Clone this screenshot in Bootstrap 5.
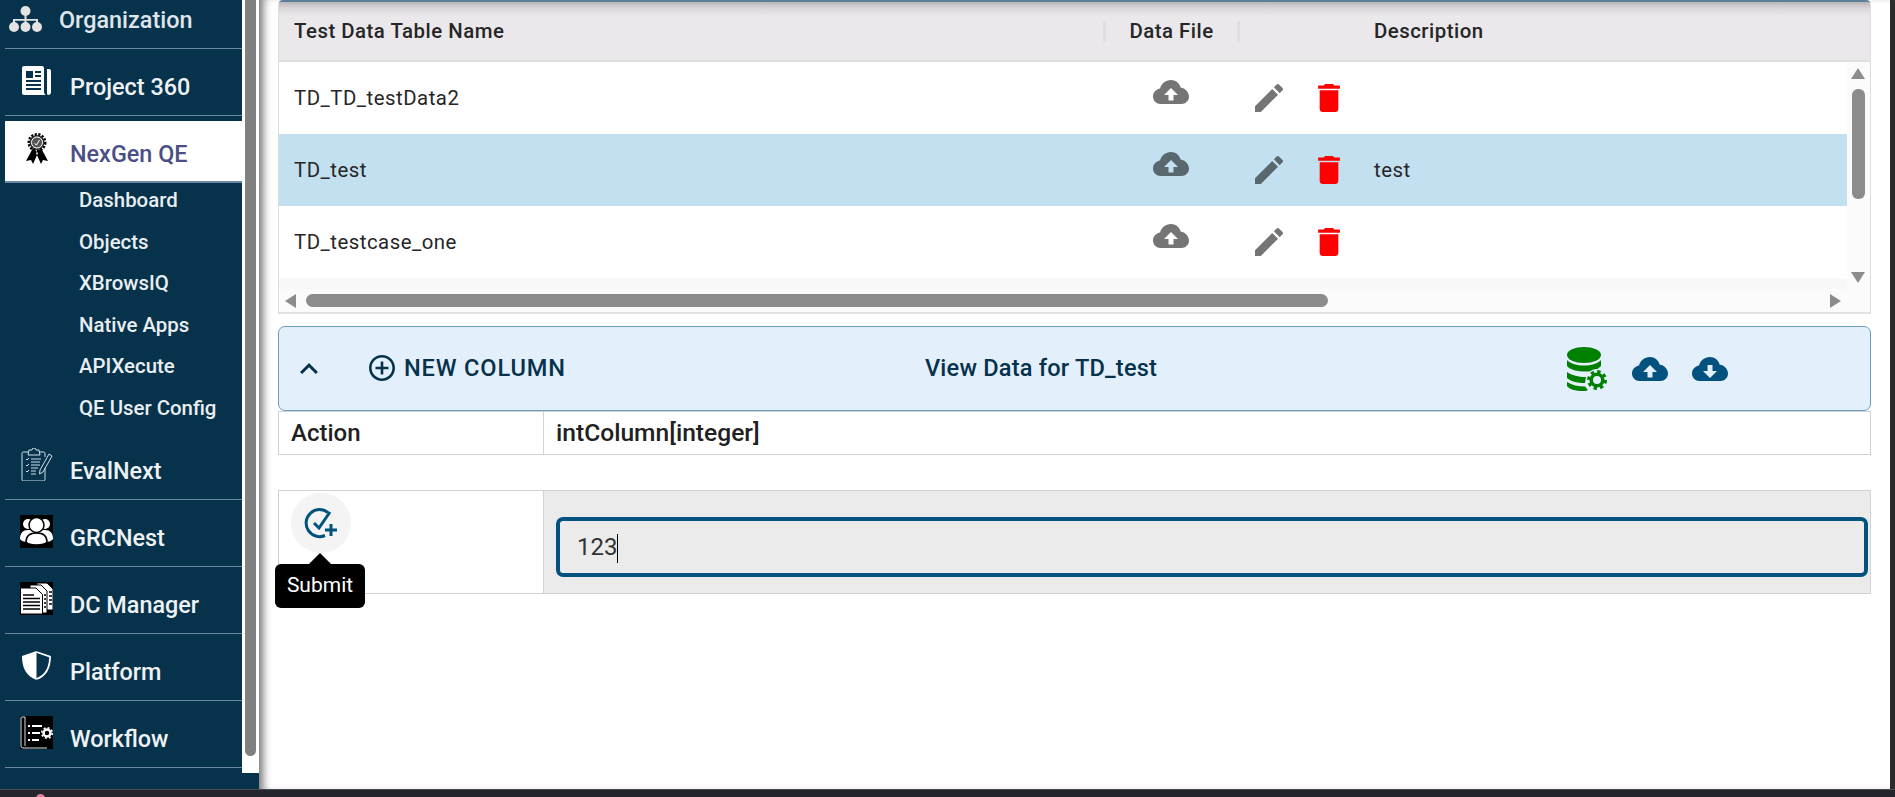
<!DOCTYPE html>
<html lang="en">
<head>
<meta charset="utf-8">
<title>NexGen QE</title>
<link href="https://cdn.jsdelivr.net/npm/bootstrap@5.3.0/dist/css/bootstrap.min.css" rel="stylesheet">
<style>
html,body{height:797px;overflow:hidden}
body{font-family:Roboto,"Liberation Sans",sans-serif;background:#24262d;color:#212121}
.shell{height:789px}
.sidebar{width:259px;background:#06324b;flex:none}
.side-list{width:242px;padding-left:5px;height:789px}
.gutter{width:17px;height:773px;background:#fff;padding:0 3px}
.gutter-thumb{height:756px;background:#808080;border-radius:0 0 6px 6px}
.side-item{height:67px;border-bottom:1px solid #6f86a3;color:#eef2f5;font-size:23.4px;font-weight:500;padding-top:11px}
.side-item svg{flex:none}
.side-item .ic{width:33px;margin-left:15px;margin-right:17px;margin-top:-15px;display:flex;justify-content:center}
.side-first{height:49px;padding-top:0;color:#dfe5ea}
.side-first .ic{margin-left:4px;margin-right:17px;margin-top:-11px}
.side-first .lbl{margin-top:-6px}
.side-active{height:62px;margin-top:5px;background:#fff;color:#4b4f86;padding-top:0;border-bottom:2px solid #6f86a3}
.side-active .ic{margin-top:-5px}
.side-active .lbl{margin-top:8px}
.sub-list{height:250px;margin-top:-3px;margin-bottom:3px}
.sub-item{height:41.6px;padding-left:74px;font-size:20.4px;font-weight:500;color:#e9eef2;line-height:41px}
.main-pane{box-shadow:inset 9px 0 8px -5px rgba(0,0,0,.55);background:#fff;padding:0 19px;min-width:0}
.edge{width:5px;background:#2b2b2b;flex:none}
.bottom-bar{height:8px;background:#24262d;border-top:1px solid #4a4c52;padding-left:36px}
.pink-dot{width:9px;height:9px;border-radius:50%;background:#e8809a;margin-top:4px}
.dt-card{height:314px;border:1px solid #ddd;border-top:2px solid #5d7f99;border-radius:5px 5px 0 0;border-bottom:2px solid #e2e2e2;margin-bottom:12px;background:#fbfbfb;overflow:hidden}
table.dt{table-layout:fixed;width:100%;margin:0;letter-spacing:.5px;font-size:20.4px}
table.dt th,table.dt td{padding:0;border:0;vertical-align:middle;color:#262626}
table.dt th{height:59px;padding-top:1px;font-weight:500;font-size:20.4px;--bs-table-bg:transparent;border-bottom:2px solid #dedede}
.dt-head{background:linear-gradient(#b8b6b8 0,#d8d6d8 6px,#eae8ea 14px)}
.c-name{width:825px}
.c-file,.c-act{width:135px}
table.dt .p-name{padding-left:15px}
.hsep{border-left:3px solid #e0dfe0;border-right:3px solid #e0dfe0;height:21px;line-height:21px;margin:0 -1px}
table.dt td{height:72px;background:#fff}
table.dt tr.picked td{--bs-table-bg:#c3e0f1;background:#c3e0f1}
.cloud-ic{display:block;margin:-12px 0 0 49px;fill:rgba(0,0,0,.54)}
.act-cell{padding-left:16px!important}
.act-row{gap:35px}
.act-pen{fill:rgba(0,0,0,.54)}
.act-bin{fill:#f00}
.strip{height:11px;background:#f8f8f8}
.vscroll{width:23px;height:226px;background:#fbfbfb;padding:6px 0 5px 4px;flex:none}
.vthumb{width:13px;height:110px;background:#8c8c8c;border-radius:6px;margin:10px 0 0 1px}
.tri-up,.tri-down{width:0;height:0;border-left:7.5px solid transparent;border-right:7.5px solid transparent}
.tri-up{border-bottom:11px solid #8c8c8c}
.tri-down{border-top:11px solid #8c8c8c}
.hscroll{height:24px;padding:5px 0 0 6px}
.tri-left,.tri-right{width:0;height:0;border-top:7px solid transparent;border-bottom:7px solid transparent}
.tri-left{border-right:11px solid #8c8c8c}
.tri-right{border-left:11px solid #8c8c8c;margin-right:29px}
.hthumb{height:13px;background:#8c8c8c;border-radius:7px;margin-left:10px}
.panel-bar{height:85px;background:#e3f0fc;border:1px solid #6b9bbd;border-radius:7px;color:#06324b}
.chev{margin-left:21px;fill:#06324b}
.new-col{margin-left:51px;padding:0;border:0;background:none;color:#06324b;font-size:23.6px;font-weight:500;letter-spacing:.85px}
.new-col svg{fill:#06324b;margin-right:9px}
.view-title{font-size:23.6px;font-weight:500;margin-left:359px;letter-spacing:.2px}
.bar-icons{margin-right:142px}
.bar-icons .up-ic{fill:#01527f;margin-left:24px}
table.grid-t{table-layout:fixed;width:100%;margin:0;border-color:#d2d2d2;font-size:24px}
table.grid-t td{border:1px solid #d2d2d2;padding:0;color:#212121}
.g-left{width:265px}
.r-head td{height:43px;vertical-align:middle;line-height:1.2}
.r-head td:first-child{padding-left:12px!important;font-weight:500}
.r-head td:last-child{padding-left:12px!important;font-size:24.6px;font-weight:500}
.spacer-row{height:35px}
.r-edit td{height:101px}
table.grid-t .edit-cell{background:#ebebeb;padding:26px 2px 0 12px;vertical-align:top}
.submit-wrap{width:60px;margin-left:12px;height:100px}
.submit-btn{width:60px;height:60px;padding:2px 0 0;border:0;border-radius:50%;background:#f4f4f4;margin-top:2px}
.tip{left:-16px;top:71px;width:90px;height:44px;background:#000;color:#fff;border-radius:6px;font-size:21px;z-index:5}
.tip::before{content:"";position:absolute;left:34px;top:-11px;border-left:11px solid transparent;border-right:11px solid transparent;border-bottom:11px solid #000}
.val-input.form-control{height:60px;background:#ebebeb;border:4px solid #01527f;border-radius:7px;font-size:24px;padding:0 17px;color:#333;box-shadow:none;caret-color:transparent;font-family:Roboto,sans-serif}
.caret-mark{left:61px;top:17px;width:1px;height:29px;background:#000}
</style>
</head>
<body class="d-flex flex-column">
<div class="shell d-flex">
  <aside class="sidebar d-flex align-items-start">
    <nav class="side-list">
      <div class="side-item side-first d-flex align-items-center"><span class="ic">
        <svg width="33" height="26" viewBox="0 0 33 26" fill="#e3e3e3"><circle cx="16.5" cy="5" r="5"/><circle cx="5" cy="21" r="5"/><circle cx="16.5" cy="21" r="5"/><circle cx="28" cy="21" r="5"/><path d="M15.5 8h2v5H29v4h-2v-2.200H17.500V17h-2v-2.200H6V17H4v-4h11.500z"/></svg></span><span class="lbl">Organization</span></div>
      <div class="side-item d-flex align-items-center"><span class="ic">
        <svg width="29" height="29" viewBox="0 0 29 29"><path fill="#fff" d="M2 0h18a2 2 0 0 1 2 2v24c0 1 .5 2 1.500 3H2a2 2 0 0 1-2-2V2a2 2 0 0 1 2-2z"/><path fill="#fff" d="M25 3h2a2 2 0 0 1 2 2v21a3 3 0 0 1-3 3l-1-1z"/><path fill="#06324b" d="M4 5h7v7H4zM13 5h6v2h-6zM13 9h6v2h-6zM4 14h15v2H4zM4 18h15v2H4zM4 22h15v2H4z"/></svg></span><span class="lbl">Project 360</span></div>
      <div class="side-item side-active d-flex align-items-center"><span class="ic">
        <svg width="22" height="31" viewBox="0 0 22 31"><path d="M7 15 0 28l5-1 2 4 5-11zM15 15l7 13-5-1-2 4-5-11z" fill="#000"/><circle cx="11" cy="9.500" r="7.500" fill="#333"/><circle cx="11" cy="9.500" r="8.300" fill="none" stroke="#000" stroke-width="2.400" stroke-dasharray="2.200 1.450"/><circle cx="11" cy="9.500" r="5.500" fill="#555" stroke="#fff" stroke-width="1"/><path d="m8.500 10.500 2 1.500 3-5" fill="none" stroke="#fff" stroke-width="1"/></svg></span><span class="lbl">NexGen QE</span></div>
      <div class="sub-list">
        <div class="sub-item">Dashboard</div>
        <div class="sub-item">Objects</div>
        <div class="sub-item">XBrowsIQ</div>
        <div class="sub-item">Native Apps</div>
        <div class="sub-item">APIXecute</div>
        <div class="sub-item">QE User Config</div>
      </div>
      <div class="side-item d-flex align-items-center"><span class="ic">
        <svg width="32" height="33" viewBox="0 0 32 33" fill="none" stroke="#cfe0ea" stroke-width="1"><path d="M7 4H2.500A1.500 1.500 0 0 0 1 5.500v26A1.500 1.500 0 0 0 2.500 33h20a1.500 1.500 0 0 0 1.500-1.500V20M19 4h3.500A1.500 1.500 0 0 1 24 5.500V9"/><path d="M8 2h3a2 2 0 0 1 4 0h3l1 5H7z"/><path d="M5 11l1 1 2-2M5 17l1 1 2-2M5 23l1 1 2-2M10 11h10M10 14h9M10 17h9M10 20h7M10 23h5M10 26h5"/><path d="M28 6l3 2-9 16-3.500 2 .5-4z"/></svg></span><span class="lbl">EvalNext</span></div>
      <div class="side-item d-flex align-items-center"><span class="ic">
        <svg width="33" height="33" viewBox="0 0 33 33"><rect width="33" height="33" fill="#000"/><g fill="#fff"><circle cx="8" cy="9" r="5"/><circle cx="25" cy="9" r="5"/><path d="M0 24c0-6 3-9 8-9h17c5 0 8 3 8 9-1 2-4 3-8 3H8c-4 0-7-1-8-3z"/></g><g fill="#fff" stroke="#000" stroke-width="1.500"><circle cx="16.500" cy="10" r="7.500"/><path d="M6 27c0-6 4-9 10.500-9S27 21 27 27c-3 4-18 4-21 0z"/></g></svg></span><span class="lbl">GRCNest</span></div>
      <div class="side-item d-flex align-items-center"><span class="ic">
        <svg width="33" height="33" viewBox="0 0 33 33"><rect width="33" height="33" fill="#000"/><g fill="#fff" stroke="#000" stroke-width="1"><path d="M17 1h10l6 6v21H17z"/><path d="M10 3h11l6 6v22H10z"/><path d="M.5 6H16l6.500 6.500V32H.5z"/></g><path stroke="#000" stroke-width="1.300" d="M3 13h11M3 16.500h17M3 20h17M3 23.500h17M3 27h17M24 13h2M24 17h2M24 21h2M24 25h2M29 10h3M29 14h3M29 18h3M29 22h3"/></svg></span><span class="lbl">DC Manager</span></div>
      <div class="side-item d-flex align-items-center"><span class="ic">
        <svg width="29" height="29" viewBox="0 0 29 29"><path fill="#fff" d="M14.500 0 0 5c0 12 4 20 14.500 24z"/><path fill="none" stroke="#fff" stroke-width="1.800" d="M14.500 1 28 5.700c0 11-4 18.800-13.500 22.300"/></svg></span><span class="lbl">Platform</span></div>
      <div class="side-item d-flex align-items-center"><span class="ic">
        <svg width="33" height="33" viewBox="0 0 33 33"><rect width="33" height="33" fill="#000"/><path d="M5 1H2a1 1 0 0 0-1 1v28a2 2 0 0 0 2 2h24M5 1v29" fill="none" stroke="#ddd" stroke-width="1"/><path d="M8 10h2M8 17h2M8 24h2M12 10h10M12 17h8M12 24h7" stroke="#fff" stroke-width="2"/><circle cx="27" cy="17" r="3.500" fill="none" stroke="#fff" stroke-width="2.500"/><circle cx="27" cy="17" r="5.300" fill="none" stroke="#fff" stroke-width="1.600" stroke-dasharray="2 2.160"/></svg></span><span class="lbl">Workflow</span></div>
    </nav>
    <div class="gutter"><div class="gutter-thumb"></div></div>
  </aside>

  <main class="main-pane flex-grow-1">
    <section class="dt-card">
      <div class="dt-head">
        <table class="table dt"><colgroup><col class="c-name"><col class="c-file"><col class="c-act"><col></colgroup>
          <thead><tr><th class="p-name">Test Data Table Name</th><th class="text-center"><div class="hsep">Data File</div></th><th></th><th>Description</th></tr></thead>
        </table>
      </div>
      <div class="d-flex">
        <div class="flex-grow-1" style="min-width:0">
          <table class="table dt"><colgroup><col class="c-name"><col class="c-file"><col class="c-act"><col></colgroup>
            <tbody>
              <tr><td class="p-name">TD_TD_testData2</td>
                <td><svg class="cloud-ic" width="36" height="24" viewBox="0 0 36 24"><path fill-rule="evenodd" d="M18 0c4.600 0 8.500 3.100 9.600 7.400C32.300 8.100 36 12 36 16.500 36 20.600 32.600 24 28.500 24h-21C3.400 24 0 20.600 0 16.500 0 12.400 3.100 9 7.100 8.500 8 3.700 12.500 0 18 0zM18 8l-7 7h4.500v5.500h5V15H25z"/></svg></td>
                <td class="act-cell"><div class="act-row d-flex align-items-center"><svg class="act-pen" width="28" height="28" viewBox="3 3 18 18"><path d="M3 17.250V21h3.750L17.810 9.940l-3.750-3.750L3 17.250zM20.710 7.040c.39-.39.39-1.020 0-1.410l-2.340-2.340c-.39-.39-1.020-.39-1.410 0l-1.830 1.830 3.750 3.750 1.830-1.830z"/></svg><svg class="act-bin" width="22" height="28" viewBox="5 3 14 18"><path d="M6 19c0 1.100.9 2 2 2h8c1.100 0 2-.9 2-2V7H6v12zM19 4h-3.500l-1-1h-5l-1 1H5v2h14V4z"/></svg></div></td>
                <td></td></tr>
              <tr class="picked"><td class="p-name">TD_test</td>
                <td><svg class="cloud-ic" width="36" height="24" viewBox="0 0 36 24"><path fill-rule="evenodd" d="M18 0c4.600 0 8.500 3.100 9.600 7.400C32.300 8.100 36 12 36 16.500 36 20.600 32.600 24 28.500 24h-21C3.400 24 0 20.600 0 16.500 0 12.400 3.100 9 7.100 8.500 8 3.700 12.500 0 18 0zM18 8l-7 7h4.500v5.500h5V15H25z"/></svg></td>
                <td class="act-cell"><div class="act-row d-flex align-items-center"><svg class="act-pen" width="28" height="28" viewBox="3 3 18 18"><path d="M3 17.250V21h3.750L17.810 9.940l-3.750-3.750L3 17.250zM20.710 7.040c.39-.39.39-1.020 0-1.410l-2.340-2.340c-.39-.39-1.020-.39-1.410 0l-1.830 1.830 3.750 3.750 1.830-1.830z"/></svg><svg class="act-bin" width="22" height="28" viewBox="5 3 14 18"><path d="M6 19c0 1.100.9 2 2 2h8c1.100 0 2-.9 2-2V7H6v12zM19 4h-3.500l-1-1h-5l-1 1H5v2h14V4z"/></svg></div></td>
                <td>test</td></tr>
              <tr><td class="p-name">TD_testcase_one</td>
                <td><svg class="cloud-ic" width="36" height="24" viewBox="0 0 36 24"><path fill-rule="evenodd" d="M18 0c4.600 0 8.500 3.100 9.600 7.400C32.300 8.100 36 12 36 16.500 36 20.600 32.600 24 28.500 24h-21C3.400 24 0 20.600 0 16.500 0 12.400 3.100 9 7.100 8.500 8 3.700 12.500 0 18 0zM18 8l-7 7h4.500v5.500h5V15H25z"/></svg></td>
                <td class="act-cell"><div class="act-row d-flex align-items-center"><svg class="act-pen" width="28" height="28" viewBox="3 3 18 18"><path d="M3 17.250V21h3.750L17.810 9.940l-3.750-3.750L3 17.250zM20.710 7.040c.39-.39.39-1.020 0-1.410l-2.340-2.340c-.39-.39-1.020-.39-1.410 0l-1.830 1.830 3.750 3.750 1.830-1.830z"/></svg><svg class="act-bin" width="22" height="28" viewBox="5 3 14 18"><path d="M6 19c0 1.100.9 2 2 2h8c1.100 0 2-.9 2-2V7H6v12zM19 4h-3.500l-1-1h-5l-1 1H5v2h14V4z"/></svg></div></td>
                <td></td></tr>
            </tbody>
          </table>
          <div class="strip"></div>
        </div>
        <div class="vscroll d-flex flex-column">
          <div class="tri-up"></div><div class="vthumb"></div><div class="flex-grow-1"></div><div class="tri-down"></div>
        </div>
      </div>
      <div class="hscroll d-flex justify-content-between">
        <div class="d-flex"><div class="tri-left"></div><div class="hthumb" style="width:1022px"></div></div>
        <div class="tri-right"></div>
      </div>
    </section>

    <section class="panel-bar d-flex align-items-center">
      <svg class="chev" width="18" height="11" viewBox="6 8 12 7.410"><path d="M12 8l-6 6 1.410 1.410L12 10.830l4.590 4.580L18 14z"/></svg>
      <button class="new-col d-flex align-items-center" type="button"><svg width="26" height="26" viewBox="2 2 20 20"><path d="M13 7h-2v4H7v2h4v4h2v-4h4v-2h-4V7zm-1-5C6.480 2 2 6.480 2 12s4.480 10 10 10 10-4.480 10-10S17.520 2 12 2zm0 18c-4.410 0-8-3.590-8-8s3.590-8 8-8 8 3.590 8 8-3.590 8-8 8z"/></svg>NEW COLUMN</button>
      <div class="view-title">View Data for TD_test</div>
      <div class="bar-icons ms-auto d-flex align-items-center">
        <svg width="41" height="44" viewBox="0 0 41 44"><g fill="#008000"><ellipse cx="17" cy="8" rx="17" ry="8"/><path d="M0 13c4 4 10 5.500 17 5.500S30 17 34 13v6c-3 3-6 5-12 5.500C12 25 3 23 0 19zM0 25c5 3.500 11 5 19 5l-1 6c-8 0-15-2-18-5zM0 35c5 3 11 4.500 18 4.500l3 3.500c-1 .5-2 1-4 1-9 0-15-2-17-5z"/></g><circle cx="30" cy="33" r="11" fill="#e3f0fc"/><circle cx="30" cy="33" r="5.800" fill="none" stroke="#008000" stroke-width="3.600"/><circle cx="30" cy="33" r="8.500" fill="none" stroke="#008000" stroke-width="3" stroke-dasharray="3.400 3.270"/></svg>
        <svg class="up-ic" width="36" height="24" viewBox="0 0 36 24"><path fill-rule="evenodd" d="M18 0c4.600 0 8.500 3.100 9.600 7.400C32.300 8.100 36 12 36 16.500 36 20.600 32.600 24 28.500 24h-21C3.400 24 0 20.600 0 16.500 0 12.400 3.100 9 7.100 8.500 8 3.700 12.500 0 18 0zM18 8l-7 7h4.500v5.500h5V15H25z"/></svg>
        <svg class="up-ic" width="36" height="24" viewBox="0 0 36 24"><path fill-rule="evenodd" d="M18 0c4.600 0 8.500 3.100 9.600 7.400C32.300 8.100 36 12 36 16.500 36 20.600 32.600 24 28.500 24h-21C3.400 24 0 20.600 0 16.500 0 12.400 3.100 9 7.100 8.500 8 3.700 12.500 0 18 0zM18 21l7-7h-4.500V8h-5v6H11z"/></svg>
      </div>
    </section>

    <table class="table grid-t"><colgroup><col class="g-left"><col></colgroup>
      <tbody>
        <tr class="r-head"><td>Action</td><td>intColumn[integer]</td></tr>
      </tbody>
    </table>
    <div class="spacer-row"></div>
    <table class="table grid-t"><colgroup><col class="g-left"><col></colgroup>
      <tbody>
        <tr class="r-edit">
          <td>
            <div class="submit-wrap position-relative">
              <button class="submit-btn d-flex align-items-center justify-content-center" type="button" aria-label="Submit">
                <svg width="34" height="32" viewBox="0 0 34 32" fill="none" stroke="#01527f" stroke-width="3"><path d="M24 4.500A13.500 13.500 0 1 0 21 27.500"/><path d="M10 15l5 5L26 4"/><path d="M21 22h12M27 16v12"/></svg>
              </button>
              <div class="tip position-absolute d-flex align-items-center justify-content-center">Submit</div>
            </div>
          </td>
          <td class="edit-cell"><div class="position-relative"><input class="form-control val-input" type="text" value="123" aria-label="intColumn"><span class="caret-mark position-absolute"></span></div></td>
        </tr>
      </tbody>
    </table>
  </main>
  <div class="edge"></div>
</div>
<footer class="bottom-bar d-flex"><span class="pink-dot"></span></footer>
<script src="https://cdn.jsdelivr.net/npm/bootstrap@5.3.0/dist/js/bootstrap.bundle.min.js"></script>
</body>
</html>
